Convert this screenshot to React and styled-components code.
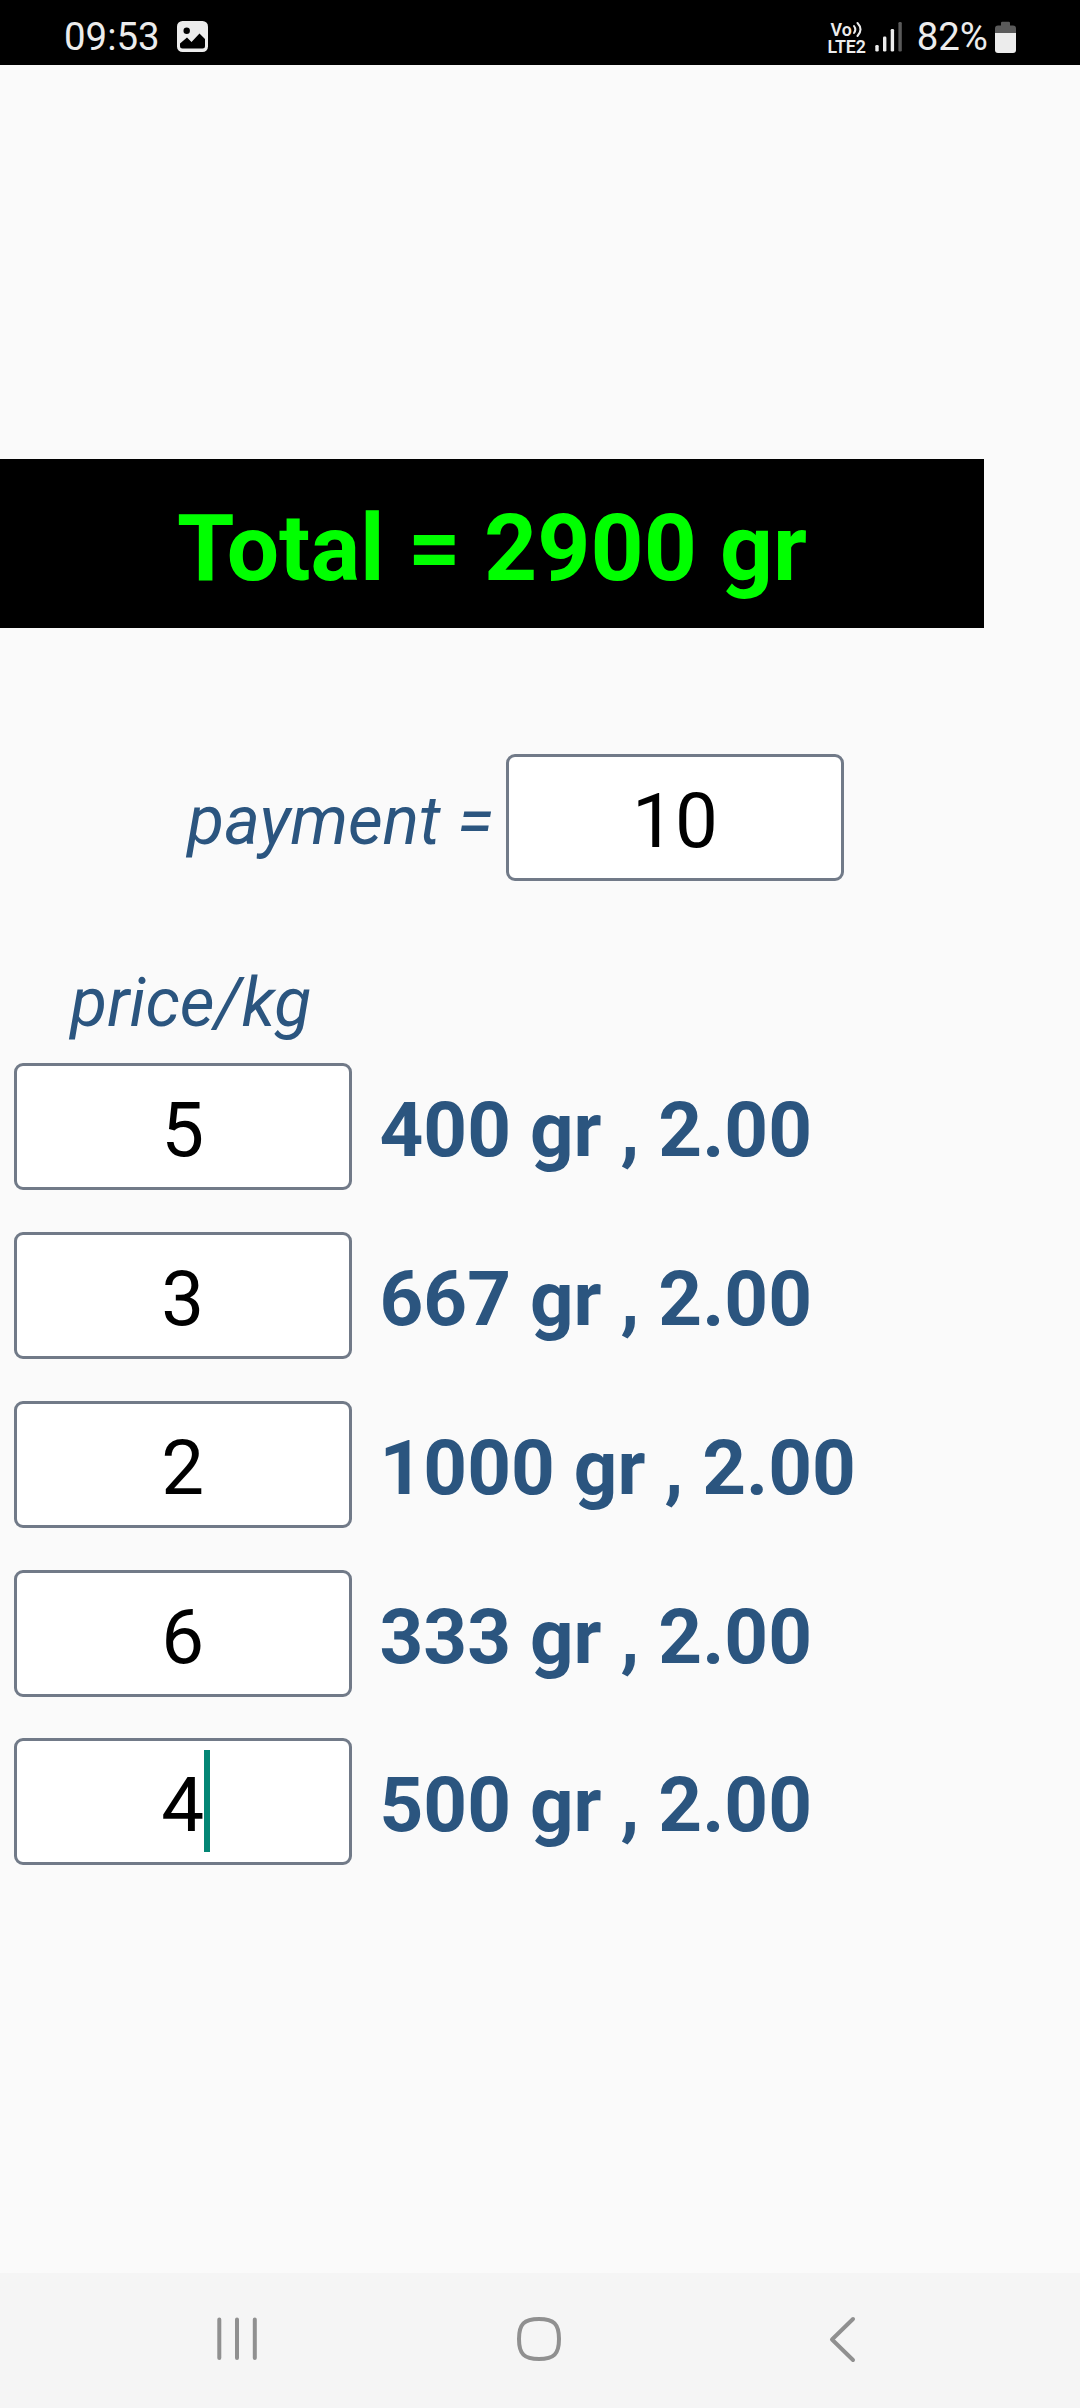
import React from "react";
import styled, { createGlobalStyle } from "styled-components";

const Global = createGlobalStyle`
  *, *::before, *::after { box-sizing: border-box; }
  body { margin: 0; background: #fafafa; }
`;

const Screen = styled.div`
  width: 1080px;
  height: 2408px;
  display: flex;
  flex-direction: column;
  background: #fafafa;
  font-family: Roboto, "Noto Sans", sans-serif;
  overflow: hidden;
`;

const StatusBar = styled.header`
  flex: none;
  height: 65px;
  padding: 8px 64px 0 64px;
  display: flex;
  align-items: center;
  justify-content: space-between;
  background: #000;
  color: #ececec;
`;

const StatusGroup = styled.div`
  display: flex;
  align-items: center;
`;

const StatusText = styled.span`
  font-size: 38.4px;
  line-height: 46px;
  white-space: nowrap;
`;

const PictureIcon = styled.svg`
  display: block;
  width: 31px;
  height: 31px;
  margin-left: 17px;
`;

const Network = styled.div`
  display: flex;
  flex-direction: column;
  align-items: center;
  width: 40px;
  padding-top: 2px;
  margin-right: 8px;
  font-size: 17.8px;
  font-weight: 600;
  line-height: 17px;
`;

const VoLine = styled.div`
  display: flex;
  align-items: center;
  height: 17px;
`;

const Waves = styled.svg`
  display: block;
  width: 11px;
  height: 17px;
`;

const SignalIcon = styled.svg`
  display: block;
  width: 28px;
  height: 31px;
  margin-right: 14px;
`;

const BatteryIcon = styled.svg`
  display: block;
  width: 21px;
  height: 32px;
  margin-left: 7px;
`;

const Content = styled.main`
  flex: 1;
  display: flex;
  flex-direction: column;
  align-items: flex-start;
  padding-top: 394px;
`;

const Banner = styled.h1`
  width: 984px;
  height: 169px;
  margin: 0;
  padding-top: 10px;
  background: #000;
  color: #00ff00;
  font-size: 92.8px;
  font-weight: 700;
  line-height: 160px;
  text-align: center;
  white-space: nowrap;
`;

const PaymentRow = styled.div`
  display: flex;
  align-items: center;
  justify-content: flex-end;
  width: 843.75px;
  margin-top: 126px;
`;

const Label = styled.label`
  color: #2b557f;
  font-size: 67.7px;
  font-style: italic;
  line-height: 80px;
  white-space: nowrap;
`;

const PaymentLabel = styled(Label)`
  padding-top: 6px;
  margin-right: 13px;
`;

const PriceLabel = styled(Label)`
  width: 337.5px;
  margin: 82px 0 0 22px;
  text-align: center;
`;

const Field = styled.div`
  flex: none;
  width: 337.5px;
  height: 127px;
  padding-top: 7px;
  display: flex;
  align-items: center;
  justify-content: center;
  background: #fff;
  border: 3px solid #717a88;
  border-radius: 9px;
  color: #000;
  font-size: 76.3px;
  line-height: 90px;
`;

const Value = styled.span`
  position: relative;
`;

const Caret = styled.i`
  position: absolute;
  left: 100%;
  top: -10px;
  width: 6px;
  height: 102px;
  background: #048675;
`;

const PriceList = styled.div`
  display: flex;
  flex-direction: column;
  gap: 41.75px;
  margin: 20.4px 0 0 14px;
`;

const PriceRow = styled.div`
  display: flex;
  align-items: center;
  gap: 28px;
`;

const Result = styled.span`
  padding-top: 7px;
  color: #2b557f;
  font-size: 76.4px;
  font-weight: 700;
  line-height: 90px;
  white-space: nowrap;
`;

const NavBar = styled.nav`
  flex: none;
  height: 135px;
  padding: 0 204px 3px;
  display: flex;
  align-items: center;
  justify-content: space-between;
  background: #f5f5f5;
`;

const NavIcon = styled.svg`
  display: block;
  width: 66px;
  height: 48px;
  fill: none;
  stroke: #909090;
  stroke-width: 4;
  stroke-linecap: round;
  stroke-linejoin: round;
`;

const rows = [
  { price: "5", result: "400 gr , 2.00" },
  { price: "3", result: "667 gr , 2.00" },
  { price: "2", result: "1000 gr , 2.00" },
  { price: "6", result: "333 gr , 2.00" },
  { price: "4", result: "500 gr , 2.00", focused: true },
];

export default function App() {
  return (
    <>
      <Global />
      <Screen>
        <StatusBar>
          <StatusGroup>
            <StatusText>09:53</StatusText>
            <PictureIcon viewBox="0 0 31 31">
              <rect width="31" height="31" rx="5.5" fill="#ececec" />
              <circle cx="9.7" cy="9.8" r="3.2" fill="#000" />
              <path d="M3 22.5 L10 16.5 L14.5 21 L22.5 12.5 L28 18 V25 Q28 27.5 25.5 27.5 H5.5 Q3 27.5 3 25 Z" fill="#000" />
            </PictureIcon>
          </StatusGroup>
          <StatusGroup>
            <Network>
              <VoLine>
                Vo
                <Waves viewBox="0 0 11 17" fill="none" stroke="#ececec" strokeWidth="2" strokeLinecap="round">
                  <path d="M2 5 Q4.6 8.5 2 12" />
                  <path d="M5.5 2 Q11.5 8.5 5.5 15" />
                </Waves>
              </VoLine>
              <span>LTE2</span>
            </Network>
            <SignalIcon viewBox="0 0 28 31">
              <rect x="0.3" y="24" width="3.4" height="6.5" rx="1.3" fill="#ececec" />
              <rect x="8" y="15.5" width="3.4" height="15" rx="1.3" fill="#ececec" />
              <rect x="15.7" y="8" width="3.4" height="22.5" rx="1.3" fill="#ececec" />
              <rect x="23.4" y="1" width="3.4" height="29.5" rx="1.3" fill="#5a5a5a" />
            </SignalIcon>
            <StatusText>82%</StatusText>
            <BatteryIcon viewBox="0 0 21 32">
              <path d="M6 4.5 V2 Q6 0.7 7.3 0.7 H13.7 Q15 0.7 15 2 V4.5 H18 Q21 4.5 21 7.5 V12 H0 V7.5 Q0 4.5 3 4.5 Z" fill="#5a5a5a" />
              <path d="M0 12 H21 V29 Q21 32 18 32 H3 Q0 32 0 29 Z" fill="#ececec" />
            </BatteryIcon>
          </StatusGroup>
        </StatusBar>

        <Content>
          <Banner>Total = 2900 gr</Banner>
          <PaymentRow>
            <PaymentLabel>payment =</PaymentLabel>
            <Field>
              <Value>10</Value>
            </Field>
          </PaymentRow>
          <PriceLabel>price/kg</PriceLabel>
          <PriceList>
            {rows.map((row) => (
              <PriceRow key={row.price}>
                <Field>
                  <Value>
                    {row.price}
                    {row.focused && <Caret />}
                  </Value>
                </Field>
                <Result>{row.result}</Result>
              </PriceRow>
            ))}
          </PriceList>
        </Content>

        <NavBar>
          <NavIcon viewBox="0 0 66 48">
            <path d="M15.3 4.5 V43 M33 4.5 V43 M50.8 4.5 V43" />
          </NavIcon>
          <NavIcon viewBox="0 0 66 48">
            <path d="M32 4 C47 4 52 9 52 24 C52 39 47 44 32 44 C17 44 12 39 12 24 C12 9 17 4 32 4 Z" />
          </NavIcon>
          <NavIcon viewBox="0 0 66 48">
            <path d="M43 4 L22 24.5 L43 45" />
          </NavIcon>
        </NavBar>
      </Screen>
    </>
  );
}
